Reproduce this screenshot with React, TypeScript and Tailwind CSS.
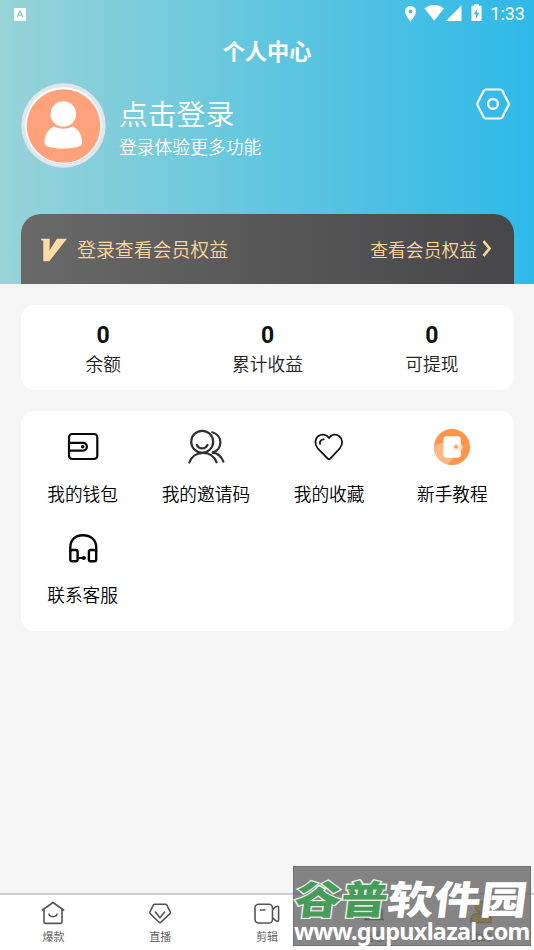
import type { ReactNode } from "react";

interface MenuItem {
    label: string;
    icon: ReactNode;
}

const WalletIcon = () => (
    <svg className="w-9 h-9" viewBox="0 0 36 36" fill="none" stroke="#0a0a0a" strokeWidth="2.2">
        <rect x="4" y="5" width="28.3" height="25" rx="3.2" />
        <path d="M4 13.8h14a3.9 3.9 0 0 1 0 7.8H4" />
        <circle cx="17.7" cy="17.7" r="1.8" fill="#0a0a0a" stroke="none" />
    </svg>
);

const InviteIcon = () => (
    <svg className="w-9 h-9 overflow-visible" viewBox="0 0 36 36" fill="none" stroke="#303030" strokeWidth="2.2" strokeLinecap="round">
        <circle cx="14.2" cy="12.8" r="11" />
        <path d="M8.8 16c2.200 4.500 8.500 4.500 10.700 0" />
        <path d="M24.300 3.300c10.500 2.800 10.800 17.200.6 20" />
        <path d="M1.300 33.500c4.300-12.500 22.600-13.200 27.300-.2" />
        <path d="M24.700 23.600c4.900.5 8.900 4.600 10.700 9" />
    </svg>
);

const HeartIcon = () => (
    <svg className="w-9 h-9" viewBox="0 0 36 36" fill="none" stroke="#151515" strokeWidth="1.8" strokeLinecap="round" strokeLinejoin="round">
        <path d="M18 9C15.6 5 10.4 4.7 7.100 7.300c-3.300 2.700-3.800 7.900-.4 12L17 29.800c.6.6 1.400.6 2 0l9.800-10.500c3.400-4.100 2.900-9.300-.4-12C25.200 4.700 20.400 5 18 9z" />
        <path d="M9 14.900c-.6-2.500 1-4.300 3.700-4.500" />
    </svg>
);

const GuideIcon = () => (
    <svg className="w-9 h-9" viewBox="0 0 36 36">
        <defs>
            <clipPath id="guide">
                <circle cx="18" cy="18" r="18" />
            </clipPath>
        </defs>
        <g clipPath="url(#guide)">
            <rect width="36" height="36" fill="#ff9549" />
            <circle cx="8.5" cy="25" r="11" fill="#ffb883" />
        </g>
        <rect x="9.5" y="7.3" width="17.3" height="21.5" rx="3" fill="#fff" />
        <rect x="18.5" y="14.7" width="10" height="6.4" rx="3.2" fill="#ffe8d2" />
        <circle cx="22" cy="17.9" r="1.7" fill="#ff9549" />
    </svg>
);

const ServiceIcon = () => (
    <svg className="w-9 h-9" viewBox="0 0 36 36" fill="none" stroke="#050505" strokeWidth="2.4">
        <path d="M5.300 21.500v-4C5.300 9.500 10.600 5.300 18 5.300s13.200 4.200 13.200 12.200v4" />
        <rect x="5.3" y="20" width="7.3" height="11.3" rx="1.8" />
        <rect x="23.900" y="20" width="7.3" height="11.3" rx="1.8" />
        <path d="M12.600 28h5" strokeWidth="2" />
        <circle cx="18.800" cy="28" r="2.1" fill="#050505" stroke="none" />
    </svg>
);

const MENU: MenuItem[] = [
    { label: "我的钱包", icon: <WalletIcon /> },
    { label: "我的邀请码", icon: <InviteIcon /> },
    { label: "我的收藏", icon: <HeartIcon /> },
    { label: "新手教程", icon: <GuideIcon /> },
    { label: "联系客服", icon: <ServiceIcon /> },
];

const STATS = [
    { label: "余额", value: "0" },
    { label: "累计收益", value: "0" },
    { label: "可提现", value: "0" },
];

const TABS: MenuItem[] = [
    {
        label: "爆款",
        icon: (
            <>
                <path d="M.8 9.500 12 1.500l11.200 8M3 8.300v12.600a1.500 1.500 0 0 0 1.500 1.500h15a1.500 1.500 0 0 0 1.500-1.500V8.300" />
                <path d="M7.800 12.500c.6 4.200 7.800 4.200 8.400 0" />
            </>
        ),
    },
    {
        label: "直播",
        icon: (
            <>
                <path d="M6.800 3.300h10.600q1 0 1.500.9l3.300 6.600q.5 1-.2 1.800L13 21.200q-1 .9-2 0L2.200 12.600q-.7-.8-.2-1.800l3.300-6.600q.5-.9 1.500-.9z" />
                <path d="m7 10.500 5 6.300 5-6.300" />
            </>
        ),
    },
    {
        label: "剪辑",
        icon: (
            <>
                <rect x="0" y="3.3" width="17.5" height="18.7" rx="3.6" />
                <path d="M5 9h5.500M17.500 8.500l3.300-2.800q2.800-1.300 2.800 1v12q0 2.300-2.800 1l-3.300-2.800" />
            </>
        ),
    },
    {
        label: "消息",
        icon: <path d="M2 18.500h20M4 18.500v-7a8 8 0 0 1 16 0v7M12 3.500V1" />,
    },
    {
        label: "我的",
        icon: (
            <g fill="#e6c23a" stroke="#b98c1c">
                <circle cx="12" cy="6" r="5.500" />
                <path d="M2 21.500v-3q0-5 6-6h8q6 1 6 6v3z" />
            </g>
        ),
    },
];

function StatusBar() {
    return (
        <div className="flex h-7 items-center justify-between pl-3.5 pr-[9px]">
            <svg className="w-3 h-[13px]" viewBox="0 0 12 13">
                <rect width="12" height="13" rx="1" fill="#fff" />
                <path d="m3.200 9.300 2.500-6h.7l2.500 6M4.400 7.200h3.300" stroke="#83cbd6" strokeWidth="1.3" fill="none" />
                <path d="M6.500 11.600h4.500" stroke="#a4d8df" strokeWidth=".8" strokeDasharray="1 .5" />
            </svg>
            <div className="flex items-center text-white">
                <svg className="h-7 w-[78px]" viewBox="0 0 78 28" fill="#fff">
                    <path fillRule="evenodd" d="M5.500 6C2.500 6 0 8.300 0 11.500c0 3.800 5.500 10 5.500 10s5.500-6.200 5.500-10C11 8.300 8.500 6 5.500 6zm0 3.600a1.900 1.900 0 1 1 0 3.800 1.900 1.900 0 0 1 0-3.800z" />
                    <path d="M19.500 8.500c5.600-4.600 13.800-4.600 19.400 0L29.200 20.700z" />
                    <path d="M56.500 5.200V21H41z" />
                    <path d="M69 4.300h5v1.400h2.500V21h-10V5.700H69z" />
                    <path d="m72.500 8.500-4 6h2.700l-.6 4.400 4-6.200h-2.700z" fill="#42bde6" />
                </svg>
                <span className="ml-[7px] w-[35px] text-right font-['Roboto'] text-[18px] leading-7">1:33</span>
            </div>
        </div>
    );
}

function Watermark() {
    return (
        <div className="absolute left-[293px] top-[866px] h-20 w-[238px] border border-[#707070] bg-[#606060]/77 text-white">
            <div className="mt-[7px] ml-px flex h-[46px] origin-center items-center -skew-x-6 scale-y-[0.84] text-[46.5px] font-black leading-[46px] whitespace-nowrap">
                <span className="text-[#479c5a] [-webkit-text-stroke:3px_#e8eee9] [paint-order:stroke_fill]">谷普</span>
                <span>软件园</span>
            </div>
            <div className="absolute left-0 top-[49px] font-['Noto_Sans'] text-[23.4px] font-bold leading-[30px] tracking-[-0.73px] whitespace-nowrap">
                www.gupuxlazal.com
            </div>
        </div>
    );
}

export default function App() {
    return (
        <div className="relative flex h-[950px] w-[534px] flex-col overflow-hidden bg-[#f5f5f5] font-['Noto_Sans_CJK_SC',sans-serif]">
            {/* Header */}
            <header className="flex h-[284px] shrink-0 flex-col bg-linear-to-r/srgb from-[#98d3d7] via-[#61c6df] to-[#2eb9e9]">
                <StatusBar />
                <h1 className="h-11 text-center text-[22.2px] font-bold leading-[44px] text-white">个人中心</h1>
                <div className="flex pl-[21px] pr-6 pt-[11px]">
                    <svg className="h-[86px] w-[85px]" viewBox="0 0 85 86">
                        <circle cx="42.5" cy="42.5" r="42.2" fill="#e2e5ec" />
                        <circle cx="42.5" cy="42.5" r="38.3" fill="#fff" />
                        <circle cx="42.5" cy="43" r="36.8" fill="#ffa17b" />
                        <circle cx="42.3" cy="31" r="12.8" fill="#fff" />
                        <path d="M33 43.500q9.300 4.500 18.600 0c5.500 2 9.400 8.500 9.400 15.500 0 4-3 4.500-6 5.300-8 1.600-17.500 1.600-25.500 0-3-.8-6-1.300-6-5.300 0-7 4-13.500 9.500-15.500z" fill="#fff" />
                    </svg>
                    <div className="ml-[13px] flex-1 pt-2.5 text-white">
                        <div className="text-[28.8px] font-[350] leading-[40px]">点击登录</div>
                        <div className="text-[17.8px] font-[350] leading-[26px]">登录体验更多功能</div>
                    </div>
                    <svg className="mt-[4px] h-[34px] w-[34px]" viewBox="0 0 34 34" fill="none" stroke="#fff">
                        <path d="M9.800 2.500h14.500q1.300 0 2 1.200l6.200 12q.6 1.300 0 2.600l-6.200 12q-.7 1.200-2 1.200H9.800q-1.300 0-2-1.200l-6.200-12q-.6-1.300 0-2.600l6.200-12q.7-1.200 2-1.200z" strokeWidth="2.2" />
                        <circle cx="17" cy="16.9" r="4.9" strokeWidth="2.4" />
                    </svg>
                </div>
                <div className="mx-[21px] mt-auto flex h-[70px] w-[493px] items-center rounded-t-[20px] bg-linear-to-r from-[#696969] to-[#474648] pl-5 pr-6 text-[#fbd899]">
                    <svg className="mt-0.5 h-6 w-[26px]" viewBox="0 0 26 24" fill="#ffdca6">
                        <path d="M0 .8h8.800L8.500 12.500 16 .8h10L8.200 23.300H2.300V2.500H.5z" />
                    </svg>
                    <span className="ml-2.5 flex-1 text-[18.9px] font-[350] leading-7">登录查看会员权益</span>
                    <span className="text-[17.8px] font-[350] leading-7">查看会员权益</span>
                    <svg className="ml-1 mr-[-3px] h-[18px] w-3" viewBox="0 0 12 18" fill="none" stroke="#fbd899" strokeWidth="2.7">
                        <path d="m2.500 1.200 6 7.300-6 7.300" />
                    </svg>
                </div>
            </header>

            {/* Balance */}
            <section className="mx-[21px] mt-[21px] grid h-[85px] w-[493px] shrink-0 grid-cols-3 rounded-[14px] bg-white pt-[17px] text-center">
                {STATS.map((s) => (
                    <div key={s.label}>
                        <div className="font-['Roboto'] text-[23px] font-bold leading-[27px] text-[#111]">{s.value}</div>
                        <div className="text-[17.7px] font-[350] leading-[28px] text-[#222]">{s.label}</div>
                    </div>
                ))}
            </section>

            {/* Menu */}
            <section className="mx-[21px] mt-[21px] grid h-[220px] w-[493px] shrink-0 grid-cols-4 auto-rows-[101px] rounded-[14px] bg-white pt-[18px]">
                {MENU.map((m) => (
                    <button key={m.label} className="flex flex-col items-center">
                        {m.icon}
                        <span className="mt-[15px] text-[17.7px] font-[350] leading-[26px] text-black">{m.label}</span>
                    </button>
                ))}
            </section>

            {/* Tab bar */}
            <nav className="mt-auto grid h-[57px] shrink-0 grid-cols-5 border-t-2 border-[#cfcfcf] bg-white pt-1.5">
                {TABS.map((t) => (
                    <button key={t.label} className="flex flex-col items-center text-[#555]">
                        <svg className="h-6 w-6 overflow-visible" viewBox="0 0 24 24" fill="none" stroke="currentColor" strokeWidth="1.6" strokeLinejoin="round">
                            {t.icon}
                        </svg>
                        <span className="mt-[3px] text-[11px] font-[350] leading-4">{t.label}</span>
                    </button>
                ))}
            </nav>

            <Watermark />
        </div>
    );
}
